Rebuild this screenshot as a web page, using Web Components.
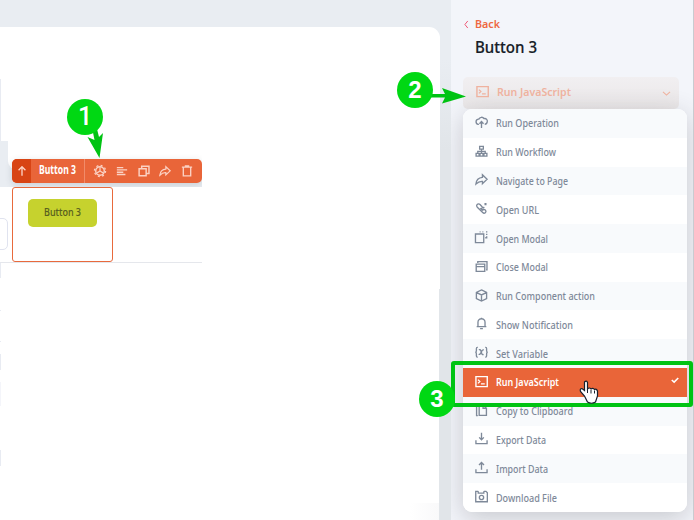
<!DOCTYPE html>
<html lang="en">
<head>
<meta charset="utf-8">
<title>Button 3</title>
<style>
html,body{margin:0;width:694px;height:520px;overflow:hidden;font-family:"Noto Sans","Open Sans",sans-serif}
</style>
</head>
<body>
<app-editor></app-editor>
<script>
const ICONS = {
  upload:'<path d="M4.2 9H3.5a2.900 2.900 0 0 1 0-5.700h.7C5 1 8.500.7 9.700 2.800c2.500-.4 4 1.400 3.500 3.600-.3 1.600-1.300 2.500-2.700 2.500M7 13V6.200M4.800 8.300 7 6l2.200 2.300"/>',
  flow:'<path d="M5 1.500h4v3H5zM1.200 9h3.200v3H1.200zM5.400 9h3.200v3H5.400zM9.600 9h3.200v3H9.600zM7 4.500V9M3 9V6.800h8V9"/>',
  share:'<path d="M8 1.900 13 6.800l-5 4.700V9C5 8.700 3 9.900 1 11.900 1.400 7.400 4 5 8 4.700z"/>',
  link:'<path d="M5.700 6.600 8 8.800c1.100-1 2.400-.9 3.200 0 .9 1 .7 2-.1 2.700-.9.8-2 .7-2.800-.1L2.500 5.700C1.600 4.700 1.500 3.500 2.300 2.600c.9-.9 2.200-.8 3.100.1l2.200 2.400c.7 1 .1 1.500-.6 1.900M8.500 6.800 10 5.300"/><path d="M10.200 1.200h2.200v2.200h-2.200z" fill="currentColor" stroke="none"/>',
  modal:'<path d="M.5 3.200h8.900v9.300H.5z"/><path d="M5 1h1M8 1h1M11.800 1h1.500M12.600 3v1.200M12.600 5.700v1.600H11"/>',
  windows:'<path d="M1.300 4.500h9.200v7.800H1.300zM1.300 7.200h9.200M3 3.200V1.700h9.900v8.900h-1"/>',
  cube:'<path d="m7 1 5.500 2.700v6.600L7 13l-5.500-2.700V3.700zM1.700 3.800 7 6.400l5.300-2.600M7 6.400v6.400"/>',
  bell:'<path d="M1.800 10.300h10.400M3.200 10V5.700a3.800 3.800 0 0 1 7.600 0V10M7 .7v1M5.500 12.600h3"/>',
  vars:'<path d="M3 1.400H2.400Q1.500 1.400 1.500 3v2Q1.500 6.500.4 6.700q1.100.2 1.100 1.700v2q0 1.600.9 1.600H3M11 1.400h.6q.9 0 .9 1.600v2q0 1.500 1.100 1.700-1.100.2-1.100 1.700v2q0 1.600-.9 1.600H11M4.200 4.200q1.400-1 2 .8l1.300 3.500q.5 1.400 1.700.5M9.500 4.400q-1.200-.8-2.400 1.400L6 8q-.9 1.500-2 .8"/>',
  terminal:'<path d="M1 1.800h12.200v10.700H1z" stroke-width="1.500"/><path d="m3.200 5 2 2-2 2M6.500 9.500h4"/>',
  copy:'<path d="M4.500 1.300H9l3.300 3.200v7.800H4.500zM8.700 1.500v3.200H12M1.700 2.500v10H3"/>',
  download:'<path d="M1 8.800v3.700h12V8.800M7 .8v7.500M4.500 5.800 7 8.300l2.500-2.500"/>',
  export:'<path d="M1 8.800v3.700h12V8.800M7 9.500V1.500M4.300 4.200 7 1.500l2.700 2.700"/>',
  disk:'<path d="M3.500 1.400H.8v11.300h12.500V2.900l-1.500-1.500H9.500M3.500 1.400v2h6v-2"/><circle cx="7" cy="8.100" r="2.300"/>',
  gear:'<circle cx="7" cy="7" r="5" stroke-width="1.700"/><circle cx="7" cy="7" r="6.500" stroke-width="1.500" stroke-dasharray="2.300 2.800"/><path d="M7 2.500V7l4 2.500M7 7 3 9.500"/>',
  lines:'<path d="M1 3h7.500M1 5.700h12M1 8.400h7.500M1 11.100h10" stroke-width="1.600"/>',
  dup:'<path d="M1.300 4.300h8.200v8.200H1.300zM4.300 4V1.500h8.500v8.300H9.600" stroke-width="1.700"/>',
  trash:'<path d="M1 2.500h12M2.700 2.500v10.200h8.600V2.500M5.200 2.300V1.200h3.600v1.100" stroke-width="1.600"/>',
  up:'<path d="M7 12.500V2M3 6l4-4 4 4" stroke-width="1.600"/>',
  left:'<path d="M9 1.500 4.500 7 9 12.500" stroke-width="1.500"/>',
  down:'<path d="m2.500 5 4.500 4 4.500-4" stroke-width="1.500"/>',
  check:'<path d="m3.200 7 2.800 2.500 4.800-4.800" stroke-width="1.800"/>'
};
function define(name, markup, after){
  const t=document.createElement('template'); t.innerHTML=markup;
  customElements.define(name, class extends HTMLElement{
    connectedCallback(){
      if(this.shadowRoot) return;
      this.attachShadow({mode:'open'}).append(t.content.cloneNode(true));
      if(after) after(this,this.shadowRoot);
    }
  });
}
define('ui-icon','<style>:host{display:block;flex:none;width:14px;height:14px}svg{display:block;width:100%;height:100%;overflow:visible}</style><span></span>',(h,r)=>{
  r.querySelector('span').innerHTML='<svg viewBox="0 0 14 14" fill="none" stroke="currentColor" stroke-width="1.45">'+ICONS[h.getAttribute('name')]+'</svg>';
});
/* Single line label, condensed to the width given in its attribute. */
define('fit-text','<style>:host{display:block;flex:none;white-space:nowrap}span{display:inline-block;transform-origin:0 50%}</style><span><slot></slot></span>',(h,r)=>{
  const s=r.querySelector('span'), w=+h.getAttribute('width');
  h.style.width=w+'px';
  s.style.transform='scaleX('+w/s.getBoundingClientRect().width+')';
});
define('menu-item',`<style>
:host{display:flex;flex:1 1 0;min-height:0;align-items:center;padding:0 6px 0 12px;box-sizing:border-box;color:#7e8999;background:#fff;font-size:10.5px;font-weight:500;line-height:16px}
:host([selected]){background:#e96539;color:#fff;font-weight:600}
ui-icon{width:13px;height:13px;margin-right:8px;margin-top:-2px}.check{margin:-4px 0 0 auto;width:12px;height:12px}
:host(:not([selected])) .check{display:none}
</style><span class="lead"></span><slot></slot><ui-icon class="check" name="check"></ui-icon>`,(h,r)=>{
  const i=document.createElement('ui-icon'); i.setAttribute('name',h.getAttribute('icon')); r.querySelector('.lead').replaceWith(i);
});
define('action-menu',`<style>
:host{display:flex;flex-direction:column;width:224px;height:403px;border-radius:9px;overflow:hidden;background:#fff;box-shadow:0 6px 26px rgba(60,60,65,.24)}
menu-item:nth-of-type(odd){background:#f8fafc}
</style>
<menu-item icon="upload"><fit-text width="63">Run Operation</fit-text></menu-item>
<menu-item icon="flow"><fit-text width="60">Run Workflow</fit-text></menu-item>
<menu-item icon="share"><fit-text width="72">Navigate to Page</fit-text></menu-item>
<menu-item icon="link"><fit-text width="43">Open URL</fit-text></menu-item>
<menu-item icon="modal"><fit-text width="52">Open Modal</fit-text></menu-item>
<menu-item icon="windows"><fit-text width="52">Close Modal</fit-text></menu-item>
<menu-item icon="cube"><fit-text width="99">Run Component action</fit-text></menu-item>
<menu-item icon="bell"><fit-text width="77">Show Notification</fit-text></menu-item>
<menu-item icon="vars"><fit-text width="52">Set Variable</fit-text></menu-item>
<menu-item icon="terminal" selected><fit-text width="63">Run JavaScript</fit-text></menu-item>
<menu-item icon="copy"><fit-text width="77">Copy to Clipboard</fit-text></menu-item>
<menu-item icon="download"><fit-text width="50">Export Data</fit-text></menu-item>
<menu-item icon="export"><fit-text width="52">Import Data</fit-text></menu-item>
<menu-item icon="disk"><fit-text width="61">Download File</fit-text></menu-item>`);
define('side-panel',`<style>
:host{display:block;box-sizing:border-box;background:#f3f5fa;border-right:1px solid #c9cbd0;padding:14px 6px 0 12px;overflow:hidden}
.back{display:flex;align-items:center;height:18px;color:#ee6842;font-size:11.5px;font-weight:600}
.back ui-icon{width:9px;height:9px;color:#ef5270;margin:3px 4px 0 -1px}
h1{margin:3px 0 0 12px;height:24px;font-size:16px;line-height:24px;font-weight:500;color:#161c26;-webkit-text-stroke:.2px #161c26}
.select{display:flex;align-items:center;width:216px;height:32px;margin-top:18px;padding:0 7px 3px 13px;box-sizing:border-box;border-radius:5px;background:linear-gradient(#f1eff1,#eae7e8);color:#efb29f;font-size:11.5px;font-weight:600}
.select ui-icon:first-child{width:13px;height:13px}
.select fit-text{margin-left:8px}.select ui-icon:last-child{margin-left:auto;width:11px;height:11px;margin-top:3px}
</style>
<div class="back"><ui-icon name="left"></ui-icon><fit-text width="25">Back</fit-text></div>
<h1><fit-text width="62">Button 3</fit-text></h1>
<div class="select"><ui-icon name="terminal"></ui-icon><fit-text width="74">Run JavaScript</fit-text><ui-icon name="down"></ui-icon></div>
<action-menu></action-menu>`);
define('tool-bar',`<style>
:host{display:flex;align-items:center;width:190px;height:24px;border-radius:5px;overflow:hidden;background:#e96539;color:#fbd1c3}
.up{display:flex;align-items:center;justify-content:center;width:19px;height:24px;background:#d84414}
.up ui-icon{width:12px;height:12px}
.name{height:24px;line-height:22px;width:54px;padding-left:8px;box-sizing:border-box;border-right:1px solid #f18b69;color:#fff;font-size:11.5px;font-weight:700}
.tools{display:flex;flex:1;justify-content:space-between;padding:0 9px}
.tools ui-icon{width:12px;height:12px}
</style><div class="up"><ui-icon name="up"></ui-icon></div><div class="name"><fit-text width="37">Button 3</fit-text></div>
<div class="tools"><ui-icon name="gear"></ui-icon><ui-icon name="lines"></ui-icon><ui-icon name="dup"></ui-icon><ui-icon name="share"></ui-icon><ui-icon name="trash"></ui-icon></div>`);
define('design-canvas',`<style>
:host{display:block;position:relative;background:#e9edf2;overflow:hidden}
div,tool-bar{position:absolute;box-sizing:border-box}
.shade{left:439px;top:60px;width:12px;height:460px;background:linear-gradient(#e9edf2,#e1e5e9 90px)}
.page{left:-12px;top:27px;width:452px;height:520px;background:#fff;border-radius:0 11px 0 0}
.step{left:439px;top:289px;width:1px;height:231px;background:#e2e6ea}
.fade{left:410px;top:503px;width:29px;height:17px;background:linear-gradient(90deg,transparent,#f9f9fa)}
.edge{left:0;width:1px;background:#e8ebf2}
.band{left:0;top:141px;width:202px;height:46px;background:#e9edf2}
.corner{left:8px;top:130px;width:194px;height:40px;background:#fff;border-radius:0 0 0 9px}
.rule{left:0;top:262px;width:202px;height:1px;background:#e5e7ec}
.input{left:-10px;top:218px;width:18px;height:32px;border:1px solid #e0e3ef;border-radius:5px}
tool-bar{left:12px;top:159px}
.sel{left:12px;top:187px;width:101px;height:75px;border:1px solid #e86a3d;border-radius:3px}
.btn{left:28px;top:199px;width:69px;height:28px;border-radius:5px;background:#c6d22e;color:#59601f;font-size:11.5px;font-weight:500;line-height:26px;padding-left:16px;-webkit-text-stroke:.1px #59601f}
.glow{left:12px;top:159px;width:190px;height:24px;border-radius:5px;box-shadow:0 2px 7px rgba(50,60,70,.17);clip-path:inset(-12px 0 -4px -12px)}
</style>
<div class="shade"></div><div class="page"></div><div class="step"></div><div class="fade"></div>
<div class="edge" style="top:79px;height:62px"></div>
<div class="band"></div><div class="corner"></div>
<div class="input"></div><div class="rule"></div>
<div class="edge" style="top:263px;height:15px"></div><div class="edge" style="top:310px;height:1px"></div><div class="edge" style="top:341px;height:1px"></div><div class="edge" style="top:354px;height:16px"></div><div class="edge" style="top:382px;height:24px;background:#f4f5fa"></div><div class="edge" style="top:450px;height:16px"></div>
<div class="glow"></div><tool-bar></tool-bar><div class="sel"></div><div class="btn"><fit-text width="37">Button 3</fit-text></div>`);
define('step-badge','<style>:host{display:flex;align-items:center;justify-content:center;width:36px;height:36px;border-radius:50%;background:#00d813;color:#fff;font:700 24px/36px "Liberation Sans",sans-serif}</style><slot></slot>');
define('guide-marks',`<style>
:host{position:absolute;inset:0;pointer-events:none}
svg{position:absolute;left:0;top:0}
step-badge{position:absolute}
.box{position:absolute;left:451px;top:361px;width:242px;height:46px;box-sizing:border-box;border:4px solid #00c313;border-radius:3px}
</style><div class="box"></div>
<svg width="694" height="520"><g fill="#00c313"><path d="m92.500 130 4.500-1 2 8 4-4-3.500 25-12-21 7 3z"/><path d="M430 94h15l-3-6 24 8.500-24 7 3-6h-15z"/></g>
<path d="M584.500 382q2-2 3 .5v6.500q2-2 3.500 0 2-1.500 3.500.5 2-1 3 1.500v5l-2 6q-4 2.500-8 0l-3-6-4-4.500q-1-3 1.500-3l2.500 2z" fill="#fff" stroke="#17202d" stroke-width="1.200"/><path d="M587.500 389v4M591 390v3.500M594.500 390.500v3" stroke="#17202d"/></svg>
<step-badge style="left:67px;top:99px;font-family:Roboto,sans-serif;font-weight:500;font-size:25px">1</step-badge><step-badge style="left:397px;top:72px">2</step-badge><step-badge style="left:419px;top:381px">3</step-badge>`);
define('app-editor',`<style>:host{display:grid;position:relative;grid-template-columns:451px 243px;width:694px;height:520px;overflow:hidden}</style><design-canvas></design-canvas><side-panel></side-panel><guide-marks></guide-marks>`);
</script>
</body>
</html>
